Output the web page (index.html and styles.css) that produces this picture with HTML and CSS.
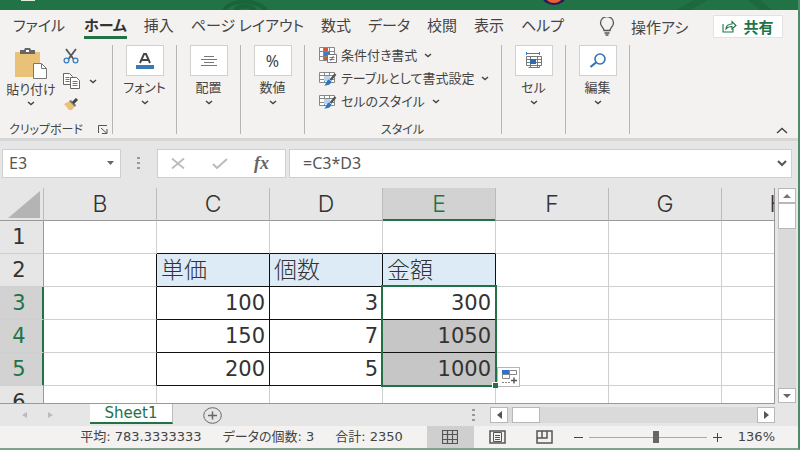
FILE: index.html
```html
<!DOCTYPE html>
<html lang="ja">
  <head>
    <meta charset="UTF-8" />
    <meta name="viewport" content="width=device-width, initial-scale=1.0" />
    <title>Sheet1 - Excel</title>
    <link rel="stylesheet" href="styles.css">
  </head>
  <body>
    <!-- Shared icons -->
    <svg class="sprite" aria-hidden="true">
      <symbol id="chevron" viewBox="0 0 8 5">
        <path d="M1 1l3 2.6L7 1" fill="none" stroke="#444" stroke-width="1.4" />
      </symbol>
      <symbol id="brush" viewBox="0 0 19 15">
        <path d="M1.500 1.500h15v10h-15zM1.500 4.500h15M1.500 8.500h15M6.500 1.500v10M11.500 1.500v10" fill="#fff" stroke="#888" />
        <path d="M6 5h6v5H6z" fill="#b7d3ec" />
        <path d="M17.500 3l-5 6" stroke="#555" stroke-width="2.400" />
        <path d="M11 8.500l2.500 2c-1 3-3 4-7.500 4 2.500-1 2-5 5-6z" fill="#2b78c2" />
      </symbol>
    </svg>

    <header class="title-bar">
      <svg class="title-save" viewBox="0 0 18 4" aria-hidden="true">
        <path d="M1 0h14v1H1z" fill="#dfece4" />
      </svg>
      <svg class="title-wave" viewBox="0 0 46 10" aria-hidden="true">
        <path d="M2 10C10-1 34-1 44 10M13 10c5-5 15-5 20 0" fill="none" stroke="#1b643a" stroke-width="4" />
      </svg>
      <svg class="avatar" viewBox="0 0 24 6" aria-hidden="true">
        <ellipse cx="12" cy="-4" rx="12" ry="9" fill="#251b62" />
        <ellipse cx="12" cy="-5" rx="9" ry="8" fill="#f0602c" />
      </svg>
      <svg class="title-stripes" viewBox="0 0 100 10" aria-hidden="true">
        <path d="M2 10L20 0h14L16 10zM74 0h12l12 10H86z" fill="#1d693e" />
      </svg>
    </header>

    <nav class="tabs">
      <a href="#file">ファイル</a>
      <a href="#home" class="active">ホーム</a>
      <a href="#insert">挿入</a>
      <a href="#layout">ページ レイアウト</a>
      <a href="#formulas">数式</a>
      <a href="#data">データ</a>
      <a href="#review">校閲</a>
      <a href="#view">表示</a>
      <a href="#help">ヘルプ</a>
      <button class="assist">
        <svg width="16" height="19" viewBox="0 0 16 19" fill="none" stroke="#555" stroke-width="1.300">
          <path d="M5 13.500c0-3-3.500-4-3.500-7.500a6 6 0 0 1 13 0c0 3.500-3.500 4.500-3.500 7.500zM5.500 16h5M6.500 18h3" />
        </svg>
        操作アシ
      </button>
      <button class="share">
        <svg width="15" height="13" viewBox="0 0 15 13" fill="none" stroke="#217346" stroke-width="1.100">
          <path d="M1 4v8h10V9M4 9c0-3 2-5 6-5V1.500L14 5.500l-4 3.500V6.500C7 6.500 5.500 7 4 9z" />
        </svg>
        共有
      </button>
    </nav>

    <section class="ribbon">
      <div class="group clipboard">
        <div class="clipboard-tools">
          <button class="paste">
            <svg width="34" height="32" viewBox="0 0 34 32">
              <path d="M1 4h25v25H1z" fill="#eac277" />
              <path d="M6 6V2h4l1-2h5l1 2h4v4z" fill="#666" />
              <path d="M12 2h3v2h-3z" fill="#fff" />
              <path d="M19.500 15.500h8l5 5v10h-13z" fill="#fff" stroke="#777" />
              <path d="M27.500 15.500v5h5" fill="none" stroke="#777" />
            </svg>
            <span>貼り付け</span>
            <svg class="chevron"><use href="#chevron" /></svg>
          </button>
          <div class="clipboard-small">
            <button aria-label="切り取り">
              <svg width="16" height="16" viewBox="0 0 16 16" fill="none">
                <path d="M3 1l7.500 10M13 1L5.500 11" stroke="#555" stroke-width="1.800" />
                <circle cx="3.500" cy="12.500" r="2.400" stroke="#3c7fc0" stroke-width="1.300" />
                <circle cx="12.500" cy="12.500" r="2.400" stroke="#3c7fc0" stroke-width="1.300" />
              </svg>
            </button>
            <button class="copy" aria-label="コピー">
              <svg width="17" height="16" viewBox="0 0 17 16" fill="#fff" stroke="#666">
                <path d="M.5.5h6l3 3v8h-9z" />
                <path d="M2.500 4.500h4M2.500 6.500h4M2.500 8.500h4" stroke="#3c7fc0" />
                <path d="M7.500 4.500h6l3 3v8h-9z" />
                <path d="M9.500 8.500h5M9.500 10.500h5M9.500 12.500h5" stroke="#3c7fc0" />
              </svg>
              <svg class="chevron"><use href="#chevron" /></svg>
            </button>
            <button aria-label="書式のコピー">
              <svg width="16" height="13" viewBox="0 0 16 13">
                <path d="M1 6l6-3 5 5-3 4H6z" fill="#eac277" />
                <path d="M6 3l2-1 5 5-1 2z" fill="#777" />
                <path d="M10 5l4-4" stroke="#444" stroke-width="3" />
              </svg>
            </button>
          </div>
        </div>
        <div class="group-name">
          クリップボード
          <button class="launcher" aria-label="クリップボードの設定">
            <svg width="10" height="9" viewBox="0 0 10 9" fill="none" stroke="#555">
              <path d="M.5 8V.5H9M3 3l5.500 5M9 4v4.500H4" />
            </svg>
          </button>
        </div>
      </div>

      <button class="group big">
        <span class="big-icon">
          <svg width="20" height="18" viewBox="0 0 20 18">
            <path d="M5 11l4-9h2l4 9M6.500 8h7" fill="none" stroke="#444" stroke-width="1.900" />
            <path d="M1 13h18v4H1z" fill="#3c78b4" />
          </svg>
        </span>
        フォント
        <svg class="chevron"><use href="#chevron" /></svg>
      </button>
      <button class="group big">
        <span class="big-icon">
          <svg width="16" height="10" viewBox="0 0 16 10" stroke="#777">
            <path d="M3 .5h10M0 3.500h16M3 6.500h10M0 9.500h16" />
          </svg>
        </span>
        配置
        <svg class="chevron"><use href="#chevron" /></svg>
      </button>
      <button class="group big">
        <span class="big-icon percent">%</span>
        数値
        <svg class="chevron"><use href="#chevron" /></svg>
      </button>

      <div class="group styles">
        <button>
          <svg width="19" height="16" viewBox="0 0 19 16">
            <path d="M1.500.5h15v13h-15zM1.500 4.500h15M1.500 9.500h15M5.500.5v13M11.500.5v13" fill="#fff" stroke="#888" />
            <path d="M6 1h4v3H6zM6 10h4v3H6z" fill="#d65532" />
            <path d="M6 5h6v4H6z" fill="#3c7fc0" />
            <path d="M9.500 7.500h9v8h-9z" fill="#fff" stroke="#777" />
            <path d="M11.500 10.500h5M11.500 12.500h5M15.500 9l-3 5" stroke="#555" stroke-width=".8" />
          </svg>
          条件付き書式
          <svg class="chevron"><use href="#chevron" /></svg>
        </button>
        <button>
          <svg width="19" height="15"><use href="#brush" /></svg>
          テーブルとして書式設定
          <svg class="chevron"><use href="#chevron" /></svg>
        </button>
        <button>
          <svg width="19" height="15"><use href="#brush" /></svg>
          セルのスタイル
          <svg class="chevron"><use href="#chevron" /></svg>
        </button>
        <div class="group-name">スタイル</div>
      </div>

      <button class="group big">
        <span class="big-icon">
          <svg width="18" height="17" viewBox="0 0 18 17" fill="none" stroke="#777">
            <path d="M1.500 4.500h15v9h-15zM1.500 7.500h15M1.500 10.500h15M5.500 4.500v11M12.500 4.500v11M3.500 15.500h11v-2" />
            <path d="M5 7h6v5H5z" fill="#2b6cb0" stroke="none" />
            <path d="M1 1.500h14M1.500 0v3M14.500 0v3" stroke="#3c7fc0" />
          </svg>
        </span>
        セル
        <svg class="chevron"><use href="#chevron" /></svg>
      </button>
      <button class="group big">
        <span class="big-icon">
          <svg width="18" height="16" viewBox="0 0 18 16" fill="none" stroke="#3672b0">
            <circle cx="11" cy="6" r="5" stroke-width="1.600" />
            <path d="M7 9.500L1.500 14" stroke-width="2.200" />
          </svg>
        </span>
        編集
        <svg class="chevron"><use href="#chevron" /></svg>
      </button>
      <button class="collapse" aria-label="リボンを折りたたむ">
        <svg width="12" height="7" viewBox="0 0 12 7" fill="none" stroke="#444" stroke-width="1.400">
          <path d="M1 6l5-4.500L11 6" />
        </svg>
      </button>
    </section>

    <section class="formula-bar">
      <div class="name-box">
        <input type="text" value="E3" aria-label="名前ボックス" />
        <button aria-label="名前の一覧">
          <svg width="7" height="4" viewBox="0 0 7 4"><path d="M0 0h7L3.500 4z" fill="#666" /></svg>
        </button>
      </div>
      <svg class="dots" width="3" height="13" viewBox="0 0 3 13" fill="#999">
        <path d="M0 0h3v2H0zM0 5h3v2H0zM0 10h3v2H0z" />
      </svg>
      <div class="formula-buttons">
        <button aria-label="キャンセル">
          <svg width="14" height="11" viewBox="0 0 14 11"><path d="M1 .5l12 10M13 .5l-12 10" stroke="#bbb" stroke-width="1.800" /></svg>
        </button>
        <button aria-label="入力">
          <svg width="16" height="11" viewBox="0 0 16 11"><path d="M1 6l4 4L15 1" fill="none" stroke="#bbb" stroke-width="2" /></svg>
        </button>
        <button class="fx" aria-label="関数の挿入">fx</button>
      </div>
      <div class="formula">
        <input type="text" value="=C3*D3" aria-label="数式バー" />
        <button aria-label="数式バーの展開">
          <svg width="10" height="7" viewBox="0 0 10 7"><path d="M1 1l4 4 4-4" fill="none" stroke="#555" stroke-width="2" /></svg>
        </button>
      </div>
    </section>

    <main class="sheet">
      <div class="grid">
        <table>
          <colgroup>
            <col class="col-head" />
            <col span="7" />
          </colgroup>
          <thead>
            <tr>
              <th class="corner">
                <svg width="32" height="27" viewBox="0 0 32 27"><path d="M32 0v27H0z" fill="#b4b4b4" /></svg>
              </th>
              <th>B</th>
              <th>C</th>
              <th>D</th>
              <th class="selected">E</th>
              <th>F</th>
              <th>G</th>
              <th>H</th>
            </tr>
          </thead>
          <tbody>
            <tr class="above-data">
              <th>1</th>
              <td></td><td></td><td></td><td></td><td></td><td></td><td></td>
            </tr>
            <tr class="labels data">
              <th>2</th>
              <td></td><td>単価</td><td>個数</td><td>金額</td><td></td><td></td><td></td>
            </tr>
            <tr class="data">
              <th class="selected">3</th>
              <td></td><td>100</td><td>3</td>
              <td class="active-cell">
                300
                <div class="selection">
                  <button class="fill-options" aria-label="オートフィル オプション">
                    <svg width="18" height="16" viewBox="0 0 18 16" fill="none" stroke="#888">
                      <path d="M2.500 1.500h7v4h-7zM9.500 1.500h7v4h-7zM2.500 5.500h7v4h-7z" />
                      <path d="M2 1h7v4H2z" fill="#2f6fd0" stroke="none" />
                      <path d="M2 13.500h8" stroke-dasharray="2 1" />
                      <path d="M11 11.500h6M14 8.500v6" stroke="#555" stroke-width="1.400" />
                    </svg>
                  </button>
                </div>
              </td>
              <td></td><td></td><td></td>
            </tr>
            <tr class="data">
              <th class="selected">4</th>
              <td></td><td>150</td><td>7</td><td class="in-range">1050</td><td></td><td></td><td></td>
            </tr>
            <tr class="data">
              <th class="selected">5</th>
              <td></td><td>200</td><td>5</td><td class="in-range">1000</td><td></td><td></td><td></td>
            </tr>
            <tr>
              <th>6</th>
              <td></td><td></td><td></td><td></td><td></td><td></td><td></td>
            </tr>
          </tbody>
        </table>
      </div>
      <div class="scroll-y">
        <button aria-label="上へ">
          <svg width="8" height="4" viewBox="0 0 8 4"><path d="M0 4h8L4 0z" fill="#777" /></svg>
        </button>
        <div class="thumb"></div>
        <button class="end" aria-label="下へ">
          <svg width="8" height="4" viewBox="0 0 8 4"><path d="M0 0h8L4 4z" fill="#666" /></svg>
        </button>
      </div>
    </main>

    <section class="sheet-bar">
      <div class="sheet-nav">
        <button aria-label="前のシート">
          <svg width="5" height="6" viewBox="0 0 5 6"><path d="M5 0v6L0 3z" fill="#bbb" /></svg>
        </button>
        <button aria-label="次のシート">
          <svg width="5" height="6" viewBox="0 0 5 6"><path d="M0 0v6l5-3z" fill="#bbb" /></svg>
        </button>
      </div>
      <button class="sheet-tab">Sheet1</button>
      <button class="add-sheet" aria-label="新しいシート">
        <svg width="19" height="17" viewBox="0 0 19 17" fill="none" stroke="#666">
          <ellipse cx="9.500" cy="8.500" rx="8.800" ry="7.800" />
          <path d="M5 8.500h9M9.500 4.500v8" stroke-width="1.500" />
        </svg>
      </button>
      <svg class="dots" width="3" height="13" viewBox="0 0 3 13" fill="#999">
        <path d="M0 0h3v2H0zM0 5h3v2H0zM0 10h3v2H0z" />
      </svg>
      <div class="scroll-x">
        <button aria-label="左へ">
          <svg width="5" height="8" viewBox="0 0 5 8"><path d="M5 0v8L0 4z" fill="#555" /></svg>
        </button>
        <div class="thumb"></div>
        <button class="end" aria-label="右へ">
          <svg width="5" height="8" viewBox="0 0 5 8"><path d="M0 0v8l5-4z" fill="#555" /></svg>
        </button>
      </div>
    </section>

    <footer class="status-bar">
      <div class="summary">
        <span>平均: 783.3333333</span>
        <span>データの個数: 3</span>
        <span>合計: 2350</span>
      </div>
      <div class="views">
        <button class="current" aria-label="標準">
          <svg width="16" height="14" viewBox="0 0 16 14" fill="none" stroke="#555">
            <path d="M.5.5h15v13H.5zM.5 4.500h15M.5 9.500h15M5.500.5v13M10.500.5v13" stroke-width="1.200" />
          </svg>
        </button>
        <button aria-label="ページ レイアウト">
          <svg width="17" height="14" viewBox="0 0 17 14" fill="none" stroke="#555">
            <path d="M1 1h15v12H1z" stroke-width="1.500" />
            <path d="M4.500 2.500h8v9h-8zM6 5.500h5M6 7.500h5M6 9.500h5" />
          </svg>
        </button>
        <button aria-label="改ページ プレビュー">
          <svg width="17" height="14" viewBox="0 0 17 14" fill="none" stroke="#555">
            <path d="M1 1h15v12H1z" stroke-width="1.500" />
            <path d="M1 8h10V1M6 1v7" stroke-width="1.500" />
          </svg>
        </button>
      </div>
      <div class="zoom">
        <button aria-label="縮小">
          <svg width="9" height="9" viewBox="0 0 9 9"><path d="M0 4.500h9" stroke="#444" /></svg>
        </button>
        <input type="range" min="0" max="100" value="57" aria-label="ズーム" />
        <button aria-label="拡大">
          <svg width="9" height="9" viewBox="0 0 9 9"><path d="M0 4.500h9M4.500 0v9" stroke="#444" /></svg>
        </button>
        <span>136%</span>
      </div>
    </footer>
  </body>
</html>
```

FILE: styles.css
```css
/* Base Styles */
* {
  box-sizing: border-box;
  margin: 0;
  padding: 0;
}
body {
  font-family: "Noto Sans CJK JP", sans-serif;
  font-feature-settings: "palt";
  font-size: 13px;
  line-height: 20px;
  color: #444;
  background: #f3f2f1;
  display: flex;
  flex-direction: column;
  height: 100vh;
  overflow: hidden;
  border-right: 2px solid #4f8a69;
  border-bottom: 2px solid #7ba68c;
}
button {
  font: inherit;
  font-feature-settings: inherit;
  color: inherit;
  background: none;
  border: none;
  display: flex;
  align-items: center;
  justify-content: center;
}
input {
  border: none;
  background: none;
  min-width: 0;
  color: #555;
  font-family: "Noto Sans", sans-serif;
  font-size: 16px;
}
svg {
  display: block;
  flex: none;
}
.sprite {
  position: absolute;
  width: 0;
  height: 0;
}
.chevron {
  width: 8px;
  height: 5px;
}

/* Title bar */
.title-bar {
  flex: none;
  height: 10px;
  background: #217346;
  display: flex;
  padding-left: 20px;
}
.title-save {
  width: 18px;
  height: 4px;
}
.title-wave {
  width: 46px;
  height: 10px;
  margin-left: 184px;
}
.avatar {
  width: 24px;
  height: 6px;
  margin-left: auto;
}
.title-stripes {
  width: 100px;
  height: 10px;
  margin: 0 24px 0 108px;
}

/* Ribbon tabs */
.tabs {
  flex: none;
  display: flex;
  align-items: center;
  gap: 17px;
  height: 33px;
  padding: 0 15px 0 13px;
  font-size: 15px;
  white-space: nowrap;
}
.tabs a {
  color: inherit;
  text-decoration: none;
  border-bottom: 3px solid transparent;
  line-height: 22px;
}
.tabs a:nth-child(2) {
  margin-left: 2px;
}
.tabs .active {
  font-weight: bold;
  color: #333;
  border-color: #217346;
}
.assist {
  gap: 16px;
  margin-left: 18px;
}
.share {
  flex: none;
  gap: 6px;
  margin-left: auto;
  width: 70px;
  height: 23px;
  background: white;
  border: 1px solid #e3e3e3;
  color: #217346;
  font-weight: bold;
}

/* Ribbon */
.ribbon {
  flex: none;
  display: flex;
  height: 98px;
  padding: 2px 10px 4px 0;
  border-bottom: 3px solid #d6d6d6;
}
.group {
  border-right: 1px solid #b5b5b5;
}
.clipboard {
  width: 113px;
  display: flex;
  flex-direction: column;
  justify-content: space-between;
}
.clipboard-tools {
  display: flex;
  align-items: flex-start;
  gap: 8px;
  padding: 3px 0 0 7px;
}
.paste {
  flex-direction: column;
  width: 48px;
  line-height: 18px;
  white-space: nowrap;
}
.paste .chevron {
  margin-top: 3px;
}
.clipboard-small {
  display: flex;
  flex-direction: column;
  align-items: flex-start;
  gap: 9px;
}
.copy {
  gap: 9px;
}
.group-name {
  display: flex;
  align-items: center;
  justify-content: space-between;
  padding: 0 4px 0 9px;
  font-size: 12px;
  line-height: 10px;
}
.big {
  width: 64px;
  flex-direction: column;
  justify-content: flex-start;
}
.big-icon {
  display: flex;
  align-items: center;
  justify-content: center;
  width: 38px;
  height: 31px;
  margin-bottom: 1px;
  background: white;
  border: 1px solid #d0d0d0;
}
.big .chevron {
  margin-top: 3px;
}
.percent {
  font-family: "Noto Sans", sans-serif;
  font-size: 16px;
}
.styles {
  width: 197px;
  display: flex;
  flex-direction: column;
  gap: 3px;
  padding-left: 13px;
}
.styles button {
  justify-content: flex-start;
  gap: 4px;
  white-space: nowrap;
}
.styles .chevron {
  margin-left: 3px;
}
.styles .group-name {
  justify-content: center;
  margin-top: auto;
  padding: 0 14px 0 0;
}
.collapse {
  margin: auto 0 0 auto;
}

/* Formula bar */
.formula-bar {
  flex: none;
  display: flex;
  align-items: center;
  height: 47px;
  padding: 0 6px 3px 2px;
  background: #e6e6e6;
}
.name-box,
.formula-buttons,
.formula {
  display: flex;
  align-items: center;
  height: 29px;
  background: white;
  border: 1px solid #cfcfcf;
}
.name-box {
  width: 119px;
  padding: 0 6px;
}
.name-box input,
.formula input {
  flex: 1;
}
.dots {
  margin: 0 17px 0 16px;
}
.formula-buttons {
  width: 129px;
  justify-content: space-between;
  padding: 0 16px 0 13px;
}
.fx {
  font-family: "Liberation Serif", serif;
  font-size: 18px;
  font-style: italic;
  font-weight: bold;
  color: #666;
}
.formula {
  flex: 1;
  margin-left: 3px;
  padding: 0 4px 0 13px;
}

/* Sheet */
.sheet {
  flex: 1;
  min-height: 0;
  display: flex;
  background: #e6e6e6;
}
.grid {
  flex: 1;
  min-width: 0;
  overflow: hidden;
  background: white;
  border-right: 1px solid #999;
  border-bottom: 1px solid #999;
}
table {
  width: 835px;
  table-layout: fixed;
  border-collapse: separate;
  border-spacing: 0;
  font-family: "DejaVu Sans", "Noto Sans CJK JP", sans-serif;
  font-size: 21px;
  line-height: 28px;
  color: #333;
}
.col-head {
  width: 44px;
}
th,
td {
  height: 33px;
  border-right: 1px solid #cfcfcf;
  border-bottom: 1px solid #cfcfcf;
}
th {
  background: #e6e6e6;
  font-weight: normal;
  border-right-color: #bbb;
}
thead th {
  border-bottom-color: #999;
  font-family: Inter, sans-serif;
  font-size: 23px;
  font-weight: 300;
}
tbody th {
  border-right-color: #999;
  padding-right: 5px;
}
.corner svg {
  margin-left: 8px;
}
th.selected {
  background: #d2d2d2;
  color: #217346;
}
thead th.selected {
  border-bottom-color: #217346;
  box-shadow: inset 0 -1px #217346;
}
tbody th.selected {
  border-right-color: #217346;
  box-shadow: inset -1px 0 #217346;
}
td {
  padding: 0 4px;
  text-align: right;
}
.above-data td:nth-child(n + 3):nth-child(-n + 5),
.data td:nth-child(n + 3):nth-child(-n + 5) {
  border-bottom-color: #111;
}
.data td:nth-child(n + 2):nth-child(-n + 5) {
  border-right-color: #111;
}
.labels td {
  text-align: left;
  padding-bottom: 4px;
  font-family: "Noto Sans CJK JP", sans-serif;
  font-size: 23px;
  font-weight: 300;
}
.labels td:nth-child(n + 3):nth-child(-n + 5) {
  background: #ddebf7;
}
td.in-range {
  background: #c6c6c6;
}
.active-cell {
  position: relative;
}

/* Frame around the three selected cells */
.selection {
  position: absolute;
  top: -2px;
  left: -2px;
  right: -2px;
  height: 102px;
  border: 2px solid #217346;
}
.selection::after {
  content: "";
  position: absolute;
  right: -3px;
  bottom: -3px;
  width: 5px;
  height: 5px;
  background: #217346;
  border-top: 1px solid white;
  border-left: 1px solid white;
}
.fill-options {
  position: absolute;
  left: 100%;
  top: 80px;
  margin-left: 2px;
  width: 23px;
  height: 20px;
  background: white;
  border: 1px solid #b5b5b5;
}

/* Scroll bars */
.scroll-y {
  display: flex;
  flex-direction: column;
  width: 18px;
  margin: 0 2px 1px 3px;
  background: #dadada;
}
.scroll-y button,
.scroll-x button,
.thumb {
  flex: none;
  background: white;
  border: 1px solid #b8b8b8;
}
.scroll-y button {
  height: 15px;
}
.scroll-y .thumb {
  height: 26px;
}
.scroll-y .end {
  margin-top: auto;
}
.scroll-x {
  display: flex;
  width: 285px;
  height: 16px;
  background: #dadada;
}
.scroll-x button {
  width: 18px;
}
.scroll-x .thumb {
  width: 28px;
  margin-left: 4px;
}
.scroll-x .end {
  margin-left: auto;
}

/* Sheet tabs */
.sheet-bar {
  flex: none;
  display: flex;
  align-items: center;
  height: 22px;
  padding-right: 23px;
  background: #e6e6e6;
}
.sheet-nav {
  display: flex;
  justify-content: space-between;
  width: 90px;
  padding: 0 37px 0 22px;
}
.sheet-tab {
  align-self: flex-start;
  width: 83px;
  height: 20px;
  margin-right: 30px;
  background: white;
  border-right: 1px solid #bbb;
  border-bottom: 2px solid #217346;
  color: #217346;
  font-family: "DejaVu Sans", sans-serif;
  font-size: 15px;
}
.sheet-bar .dots {
  margin: 0 15px 0 auto;
}

/* Status bar */
.status-bar {
  flex: none;
  display: flex;
  align-items: center;
  justify-content: flex-end;
  height: 22px;
  padding-right: 23px;
  font-family: "DejaVu Sans", "Noto Sans CJK JP", sans-serif;
  white-space: nowrap;
}
.summary {
  display: flex;
  gap: 21px;
  margin-right: 24px;
}
.views {
  display: flex;
  height: 100%;
}
.views button {
  width: 47px;
}
.views .current {
  background: #cfcfcf;
}
.zoom {
  display: flex;
  align-items: center;
  margin-left: 6px;
}
.zoom span {
  margin-left: 16px;
}
.zoom input {
  appearance: none;
  width: 118px;
  height: 14px;
  margin: 0 6px;
  background: linear-gradient(#aaa, #aaa) center / 100% 1px no-repeat;
}
.zoom input::-webkit-slider-thumb {
  appearance: none;
  width: 6px;
  height: 12px;
  background: #666;
}
```
